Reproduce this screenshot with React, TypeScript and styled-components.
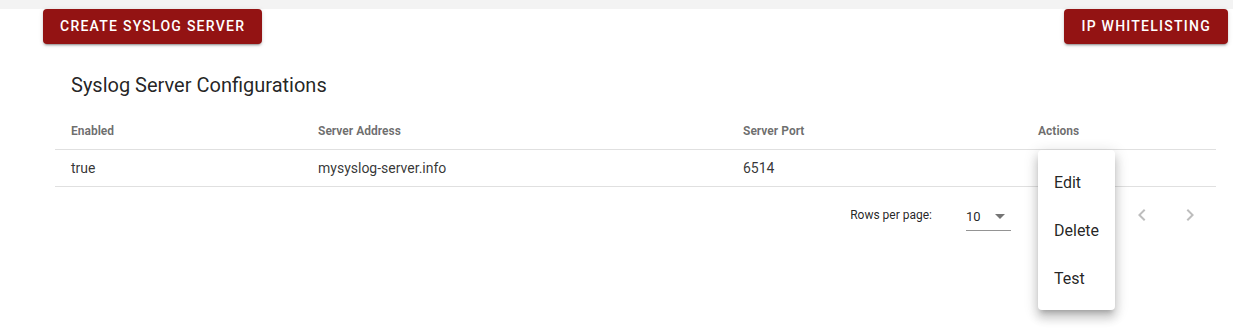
import React from "react";
import styled, { createGlobalStyle } from "styled-components";

const GlobalStyle = createGlobalStyle`
  body {
    margin: 0;
    background: #fff;
    font-family: Roboto, "Liberation Sans", Arial, sans-serif;
    color: rgba(0, 0, 0, 0.87);
  }
`;

const Page = styled.div`
  position: relative;
  width: 1233px;
  height: 328px;
  overflow: hidden;
`;

const TopStrip = styled.div`
  height: 9px;
  background: #f3f3f3;
`;

const ButtonBar = styled.div`
  display: flex;
  justify-content: space-between;
  padding: 0 5px 0 43px;
`;

const RedButton = styled.button`
  border: none;
  border-radius: 4px;
  background: #931313;
  color: #fff;
  font-family: Roboto, "Liberation Sans", sans-serif;
  font-size: 14px;
  font-weight: 500;
  letter-spacing: 1.25px;
  text-transform: uppercase;
  line-height: 19px;
  padding: 8px 17px;
  box-shadow: 0 3px 1px -2px rgba(0, 0, 0, 0.2), 0 2px 2px 0 rgba(0, 0, 0, 0.14),
    0 1px 5px 0 rgba(0, 0, 0, 0.12);
  cursor: pointer;
`;

const Content = styled.div`
  margin: 0 17px 0 55px;
`;

const Title = styled.h2`
  margin: 29px 0 0 16px;
  font-size: 20px;
  font-weight: 400;
  line-height: 24px;
  letter-spacing: 0;
  color: rgba(0, 0, 0, 0.87);
`;

const Table = styled.div`
  margin-top: 16px;
`;

const Row = styled.div<{ $head?: boolean }>`
  display: grid;
  grid-template-columns: 247px 425px 295px 1fr;
  height: 36px;
  align-items: center;
  border-bottom: 1px solid #e0e0e0;
  font-size: ${(p) => (p.$head ? "12px" : "14px")};
  font-weight: ${(p) => (p.$head ? 700 : 400)};
  color: ${(p) => (p.$head ? "rgba(0, 0, 0, 0.58)" : "rgba(0, 0, 0, 0.8)")};
`;

const Cell = styled.div`
  padding: 0 16px;
`;

const Pagination = styled.div`
  display: flex;
  align-items: center;
  justify-content: flex-end;
  height: 56px;
  padding-right: 2px;
  font-size: 12px;
  color: rgba(0, 0, 0, 0.87);
`;

const Caption = styled.span`
  margin-right: 34px;
`;

const Select = styled.div`
  display: flex;
  align-items: center;
  justify-content: space-between;
  width: 45px;
  height: 26px;
  margin-top: 6px;
  border-bottom: 1px solid rgba(0, 0, 0, 0.42);
  font-size: 13px;
  box-sizing: border-box;
  padding: 0 6px 3px 0;
`;

/* range caption sits under the open actions menu */
const PageInfoSlot = styled.span`
  margin: 0 20px 0 32px;
  width: 55px;
`;

const IconButton = styled.button`
  width: 48px;
  height: 48px;
  border: none;
  background: none;
  display: flex;
  align-items: center;
  justify-content: center;
  padding: 0;
  color: rgba(0, 0, 0, 0.26);
`;

const Menu = styled.ul`
  position: absolute;
  left: 1038px;
  top: 150px;
  width: 77px;
  margin: 0;
  padding: 8px 0;
  list-style: none;
  background: #fff;
  border-radius: 4px;
  box-shadow: 0 5px 5px -3px rgba(0, 0, 0, 0.2), 0 8px 10px 1px rgba(0, 0, 0, 0.14),
    0 3px 14px 2px rgba(0, 0, 0, 0.12);
`;

const MenuItem = styled.li`
  height: 48px;
  display: flex;
  align-items: center;
  padding-left: 16px;
  font-size: 16px;
  color: rgba(0, 0, 0, 0.87);
`;

const Chevron = ({ dir }: { dir: "left" | "right" }) => (
  <svg width="24" height="24" viewBox="0 0 24 24" fill="currentColor">
    {dir === "left" ? (
      <path d="M15.41 7.41 14 6l-6 6 6 6 1.41-1.41L10.83 12z" />
    ) : (
      <path d="M10 6 8.59 7.41 13.17 12l-4.58 4.59L10 18l6-6z" />
    )}
  </svg>
);

const columns = ["Enabled", "Server Address", "Server Port", "Actions"];
const rows = [{ enabled: "true", address: "mysyslog-server.info", port: "6514" }];

export default function App() {
  return (
    <Page>
      <GlobalStyle />
      <TopStrip />
      <ButtonBar>
        <RedButton>Create Syslog Server</RedButton>
        <RedButton>IP Whitelisting</RedButton>
      </ButtonBar>
      <Content>
        <Title>Syslog Server Configurations</Title>
        <Table>
          <Row $head>
            {columns.map((c) => (
              <Cell key={c}>{c}</Cell>
            ))}
          </Row>
          {rows.map((r) => (
            <Row key={r.address}>
              <Cell>{r.enabled}</Cell>
              <Cell>{r.address}</Cell>
              <Cell>{r.port}</Cell>
              <Cell />
            </Row>
          ))}
        </Table>
        <Pagination>
          <Caption>Rows per page:</Caption>
          <Select>
            <span>10</span>
            <svg width="10" height="5" viewBox="0 0 10 5">
              <path d="M0 0h10L5 5z" fill="rgba(0,0,0,0.54)" />
            </svg>
          </Select>
          <PageInfoSlot />
          <IconButton>
            <Chevron dir="left" />
          </IconButton>
          <IconButton>
            <Chevron dir="right" />
          </IconButton>
        </Pagination>
      </Content>
      <Menu>
        <MenuItem>Edit</MenuItem>
        <MenuItem>Delete</MenuItem>
        <MenuItem>Test</MenuItem>
      </Menu>
    </Page>
  );
}
